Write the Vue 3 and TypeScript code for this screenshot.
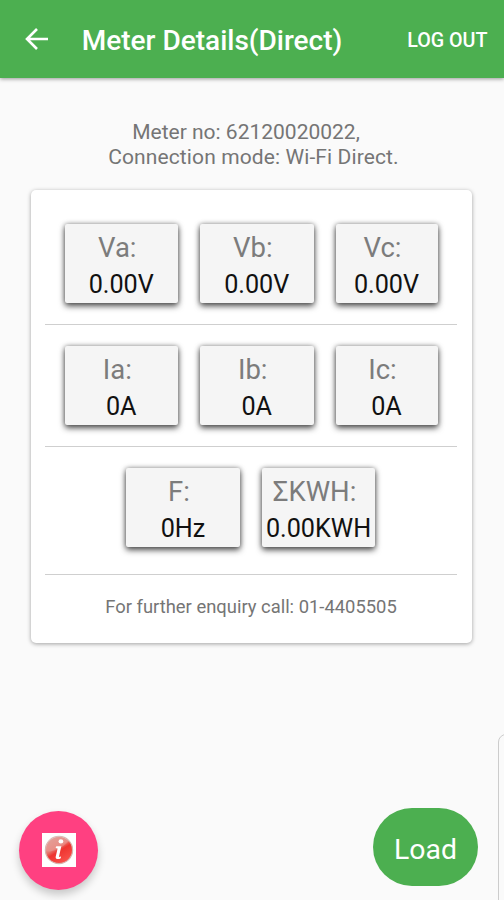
<script setup lang="ts">
interface Reading {
  label: string
  value: string
  narrow?: boolean
}

const rows: Reading[][] = [
  [
    { label: 'Va:', value: '0.00V' },
    { label: 'Vb:', value: '0.00V' },
    { label: 'Vc:', value: '0.00V', narrow: true },
  ],
  [
    { label: 'Ia:', value: '0A' },
    { label: 'Ib:', value: '0A' },
    { label: 'Ic:', value: '0A', narrow: true },
  ],
  [
    { label: 'F:', value: '0Hz' },
    { label: 'ΣKWH:', value: '0.00KWH' },
  ],
]
</script>

<template>
  <div class="screen">
    <header class="bar">
      <svg class="back" viewBox="0 0 24 22" fill="none" stroke="#fff" stroke-width="2.6">
        <path d="M23 11H2.5M12 1L2 11l10 10" />
      </svg>
      <h1 class="title">Meter Details(Direct)</h1>
      <button class="logout">LOG OUT</button>
    </header>

    <div class="info">
      <div class="line">Meter no: 62120020022,</div>
      <div class="line mode">Connection mode: Wi-Fi Direct.</div>
    </div>

    <main class="card">
      <section v-for="(row, i) in rows" :key="i" class="row" :class="{ last: i === 2 }">
        <div v-for="r in row" :key="r.label" class="tile" :class="{ narrow: r.narrow }">
          <span class="label">{{ r.label }}</span>
          <span class="value">{{ r.value }}</span>
        </div>
      </section>
      <footer class="enquiry">For further enquiry call: 01-4405505</footer>
    </main>

    <div class="actions">
      <button class="fab" aria-label="Info">
        <svg width="34" height="34" viewBox="0 0 34 34">
          <defs>
            <linearGradient id="ball" x1="0" y1="0" x2="0.6" y2="1">
              <stop offset="0" stop-color="#dd938b" />
              <stop offset="0.48" stop-color="#e57a71" />
              <stop offset="0.62" stop-color="#ee342f" />
              <stop offset="1" stop-color="#f8504a" />
            </linearGradient>
          </defs>
          <rect width="34" height="34" fill="#fff" />
          <circle cx="17" cy="17" r="13.6" fill="url(#ball)" stroke="#d9b5b0" stroke-width="1.2" />
          <path d="M4 18.5C10 19 20 16 27 8A13 13 0 0 0 4 18.5z" fill="#fff" opacity="0.16" />
          <ellipse cx="18.9" cy="8.4" rx="2.4" ry="2.1" fill="#fff" />
          <path d="M14.3 13.2h5l-2.4 10.8 2.2-.5-.4 1.7c-1.8 1.3-5.6 1.5-5-1.5l1.9-8.2-2-.4z" fill="#fff" />
        </svg>
      </button>
      <button class="load">Load</button>
    </div>
    <div class="edge-panel"></div>
  </div>
</template>

<style>
body {
  background: #fafafa;
}
</style>

<style scoped>
.screen {
  position: relative;
  box-sizing: border-box;
  width: 504px;
  height: 900px;
  overflow: hidden;
  display: flex;
  flex-direction: column;
  background: #fafafa;
  font-family: Roboto, "Liberation Sans", sans-serif;
  color: #757575;
}
button {
  border: 0;
  padding: 0;
  background: none;
  font-family: inherit;
  color: #fff;
}
.bar {
  flex: none;
  box-sizing: border-box;
  display: flex;
  align-items: center;
  height: 78px;
  padding: 3px 16.5px 0 24.5px;
  background: #4caf50;
  box-shadow: 0 1px 4px rgba(0, 0, 0, 0.4);
}
.back {
  width: 24px;
  height: 22px;
  margin-top: -3px;
}
.title {
  margin: 0 0 0 33.3px;
  font-size: 28px;
  font-weight: 500;
  line-height: 36px;
  color: #fff;
  white-space: nowrap;
}
.logout {
  margin-left: auto;
  font-size: 19.7px;
  font-weight: 500;
  line-height: 24px;
  white-space: nowrap;
}
.info {
  flex: none;
  padding: 42px 0 0;
  height: 70px;
  text-align: center;
  font-size: 21px;
  line-height: 25px;
  white-space: nowrap;
}
.line {
  padding-right: 12px;
}
.mode {
  padding-left: 3px;
  padding-right: 0;
  letter-spacing: 0.11px;
}
.card {
  flex: none;
  box-sizing: border-box;
  width: 441px;
  height: 453px;
  margin-left: 30.5px;
  padding: 13px 14.5px 0;
  background: #fff;
  border-radius: 5px;
  box-shadow: 0 1px 4px rgba(0, 0, 0, 0.36);
}
.row {
  box-sizing: border-box;
  display: flex;
  gap: 22px;
  height: 122px;
  padding: 20.5px 19.5px 0;
  border-bottom: 1px solid #cfcfcf;
}
.row.last {
  justify-content: center;
  height: 128px;
  padding-left: 19px;
}
.tile {
  flex: none;
  box-sizing: border-box;
  display: flex;
  flex-direction: column;
  align-items: center;
  width: 113.5px;
  height: 79px;
  padding-top: 6px;
  background: #f5f5f5;
  border-radius: 2px;
  box-shadow: 0 3px 6px rgba(0, 0, 0, 0.65), 0 0 5px rgba(0, 0, 0, 0.35);
  white-space: nowrap;
}
.tile.narrow {
  width: 102px;
}
.label {
  padding-right: 8px;
  font-size: 27.5px;
  line-height: 36px;
  color: #7c7c7c;
}
.value {
  font-size: 25.2px;
  line-height: 37px;
  color: #111;
}
.enquiry {
  padding-top: 20px;
  text-align: center;
  font-size: 18.4px;
  line-height: 24px;
}
.actions {
  display: flex;
  justify-content: space-between;
  align-items: flex-start;
  margin-top: auto;
  height: 92.5px;
  padding: 0 26px 0 19px;
}
.fab {
  display: flex;
  align-items: center;
  justify-content: center;
  width: 79px;
  height: 79px;
  margin-top: 3px;
  border-radius: 50%;
  background: #ff4081;
  box-shadow: 0 5px 9px rgba(0, 0, 0, 0.2);
}
.load {
  width: 105px;
  height: 78px;
  padding-top: 5px;
  border-radius: 39px;
  background: #4caf50;
  font-size: 28.4px;
}
.edge-panel {
  position: absolute;
  left: 498px;
  top: 734px;
  width: 20px;
  height: 180px;
  box-sizing: border-box;
  border: 1.5px solid #ccc;
  border-radius: 8px;
}
</style>
